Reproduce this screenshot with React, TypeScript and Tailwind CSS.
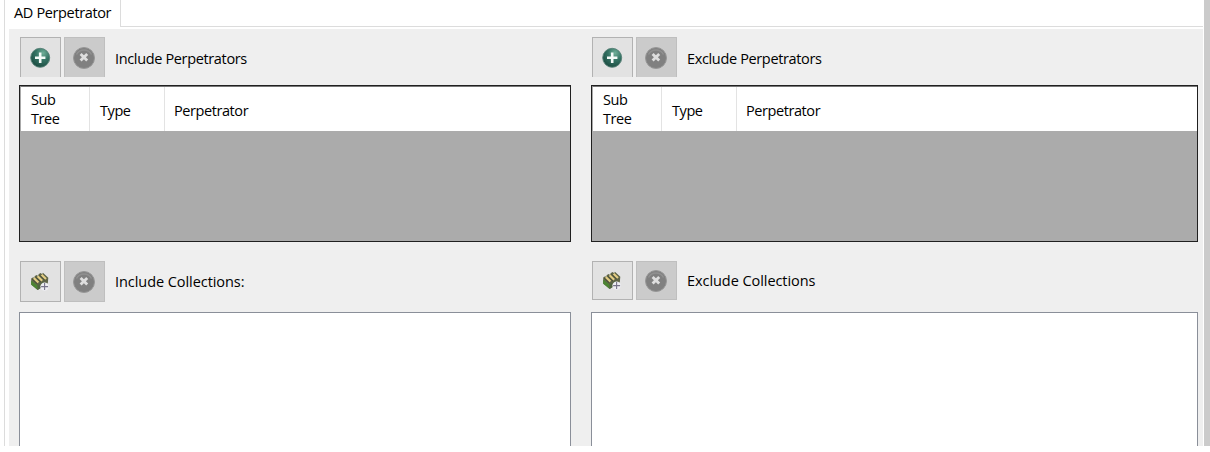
import React from 'react';

function AddIcon() {
  return (
    <svg width="22" height="22" viewBox="0 0 22 22" className="mr-px shrink-0">
      <defs>
        <radialGradient id="green" cx="0.65" cy="0.25" r="0.75">
          <stop offset="0" stopColor="#6fae98" />
          <stop offset="0.5" stopColor="#347263" />
          <stop offset="1" stopColor="#1e5045" />
        </radialGradient>
      </defs>
      <circle cx="11.2" cy="10.8" r="9.5" fill="url(#green)" stroke="#557f75" strokeWidth="0.9" />
      <path d="M11.2 5.5v10.4M6 10.7h10.4" stroke="#f4faf8" strokeWidth="2.6" />
    </svg>
  );
}

function RemoveIcon() {
  return (
    <svg width="24" height="24" viewBox="0 0 24 24" className="mr-px shrink-0">
      <circle cx="12" cy="12" r="10.5" fill="#808080" stroke="#989898" strokeWidth="1" />
      <path d="M4.5 8.5a8.4 8.4 0 0 1 15 0" stroke="#909090" strokeWidth="1.5" fill="none" />
      <path d="M8.6 8l6.6 6.6M15.2 8l-6.6 6.6" stroke="#dedede" strokeWidth="2.8" />
    </svg>
  );
}

function CollectionIcon() {
  return (
    <svg width="20" height="20" viewBox="0 0 20 20" className="mr-px shrink-0">
      <path d="M1.2 6.5l2-1.2 1 .6.6-1.9 2-1 1.2 1 .8-2 2-1 1.3 1.2.8-1.4 5.4 5-.5 5.5L7.6 18 1.2 12.5z" fill="#5f6548" />
      <path d="M1.2 8.5l6.3 5v4.3L1.2 12.7z" fill="#4c8432" />
      <path d="M7.6 13.2l2.7-1.7v4.7L7.6 18zM11.2 11l2.5-1.6v4.8l-2.5 1.5z" fill="#4f6540" />
      <path d="M3.8 6l4.6 4.5M7.6 4.2l4.6 4.5M11.6 2.7L16 7" stroke="#e3cd84" strokeWidth="2.1" />
      <path d="M2.2 7.2l5.2 4.9M5.8 5.2l5.2 5M9.7 3.4l5 5" stroke="#474c36" strokeWidth="0.9" />
      <circle cx="14.6" cy="14.6" r="4.2" fill="#eeeef3" />
      <path d="M14.6 11.1v7M11.1 14.6h7" stroke="#77748a" strokeWidth="1.1" />
    </svg>
  );
}

interface ToolbarProps {
  label: string;
  collection?: boolean;
  short?: boolean;
}

function Toolbar({ label, collection, short }: ToolbarProps) {
  const height = collection ? (short ? 'h-[39px]' : 'h-[41px]') : 'h-10';
  const edge = collection ? 'border' : 'border border-b-0';
  const text = collection ? 'tracking-[-0.06px]' : 'pt-[3px] tracking-[-0.35px]';
  return (
    <div className={`ml-px flex shrink-0 items-center gap-[3px] ${height}`}>
      <button className={`flex w-[41px] items-center justify-center border-[#b2b2b2] bg-[#e2e2e2] ${height} ${edge}`}>
        {collection ? <CollectionIcon /> : <AddIcon />}
      </button>
      <button className={`flex w-[41px] items-center justify-center border-[#bfbfbf] bg-[#cbcbcb] ${height} ${edge}`}>
        <RemoveIcon />
      </button>
      <span className={`ml-[7px] whitespace-nowrap leading-5 ${text}`}>{label}</span>
    </div>
  );
}

function Grid() {
  return (
    <div className="mt-2 flex h-[157px] shrink-0 flex-col border border-[#202020] bg-[#ababab]">
      <div className="flex h-[45px] border-l border-t border-t-[#777] border-l-[#aaa] bg-white tracking-[-0.42px]">
        <div className="flex w-[69px] items-center border-r border-[#e3e3e3] pl-[10px] pt-px leading-[18.5px]">
          <span>Sub<br />Tree</span>
        </div>
        <div className="flex w-[75px] items-center border-r border-[#e3e3e3] pl-[10px] pt-[3px]">Type</div>
        <div className="flex items-center pl-[9px] pt-[3px]">Perpetrator</div>
      </div>
    </div>
  );
}

export default function App() {
  return (
    <main className="flex h-[452px] w-[1210px] flex-col overflow-hidden bg-white font-['Open_Sans',sans-serif] text-[14.5px] text-black">
      <div className="flex h-[446px]">
        <div className="ml-1 flex w-[1199px] flex-col border-l border-[#dcdcdc]">
          <div className="flex h-[27px] shrink-0">
            <div className="w-[116px] border-r border-[#dcdcdc] pl-[9px] pt-[3px] leading-5 tracking-[-0.36px]">AD Perpetrator</div>
            <div className="flex-1 border-b border-[#dcdcdc]" />
          </div>
          <div className="ml-1 mt-[2px] flex flex-1 gap-5 bg-[#efefef] pl-[10px] pr-[5px] pt-2">
            <section className="flex w-[552px] flex-col">
              <Toolbar label="Include Perpetrators" />
              <Grid />
              <div className="h-[19px] shrink-0" />
              <Toolbar label="Include Collections:" collection />
              <div className="mt-[10px] flex-1 border border-b-0 border-[#8a8f99] bg-white" />
            </section>
            <section className="flex w-[607px] flex-col">
              <Toolbar label="Exclude Perpetrators" />
              <Grid />
              <div className="h-[19px] shrink-0" />
              <Toolbar label="Exclude Collections" collection short />
              <div className="mt-3 flex-1 border border-b-0 border-[#8a8f99] bg-white" />
            </section>
          </div>
        </div>
        <div className="ml-px flex-1 bg-[#cbcbcb]" />
      </div>
    </main>
  );
}
